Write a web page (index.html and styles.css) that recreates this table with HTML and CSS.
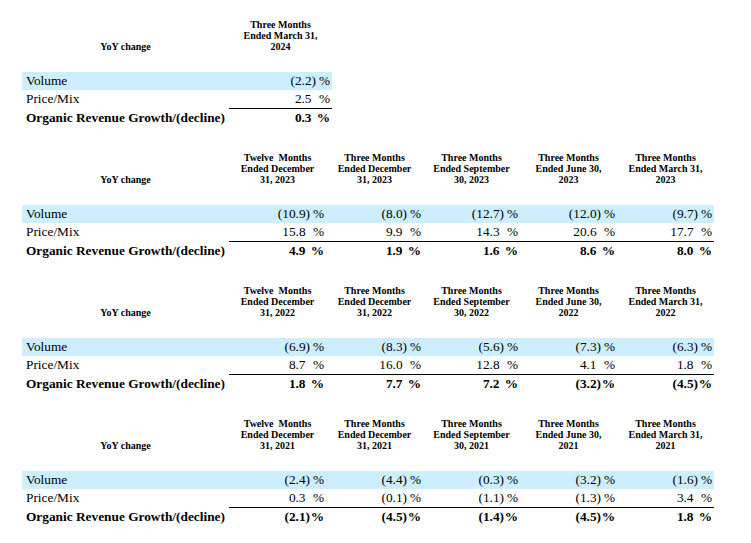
FILE: index.html
```html
<!DOCTYPE html>
<html>
<head>
<meta charset="utf-8">
<link rel="stylesheet" href="styles.css">
</head>
<body>
<div class="page">

<table class="fin t1">
  <colgroup><col class="c-label"><col class="c-wide"></colgroup>
  <thead>
    <tr>
      <th class="lbl">YoY change</th>
      <th>Three Months<br>Ended March 31,<br>2024</th>
    </tr>
  </thead>
  <tbody>
    <tr class="hl">
      <td class="lbl">Volume</td>
      <td class="num"><span class="v">(2.2)</span><span class="pct">%</span></td>
    </tr>
    <tr class="sub">
      <td class="lbl">Price/Mix</td>
      <td class="num"><span class="v">2.5<span class="ph">)</span></span><span class="pct">%</span></td>
    </tr>
    <tr class="tot">
      <td class="lbl">Organic Revenue Growth/(decline)</td>
      <td class="num"><span class="v">0.3<span class="ph">)</span></span><span class="pct">%</span></td>
    </tr>
  </tbody>
</table>

<table class="fin t5">
  <colgroup><col class="c-label"><col class="c-d"><col class="c-d"><col class="c-d"><col class="c-d"><col class="c-d"></colgroup>
  <thead>
    <tr>
      <th class="lbl">YoY change</th>
      <th>Twelve&nbsp; Months<br>Ended December<br>31, 2023</th>
      <th>Three Months<br>Ended December<br>31, 2023</th>
      <th>Three Months<br>Ended September<br>30, 2023</th>
      <th>Three Months<br>Ended June 30,<br>2023</th>
      <th>Three Months<br>Ended March 31,<br>2023</th>
    </tr>
  </thead>
  <tbody>
    <tr class="hl">
      <td class="lbl">Volume</td>
      <td class="num"><span class="v">(10.9)</span><span class="pct">%</span></td>
      <td class="num"><span class="v">(8.0)</span><span class="pct">%</span></td>
      <td class="num"><span class="v">(12.7)</span><span class="pct">%</span></td>
      <td class="num"><span class="v">(12.0)</span><span class="pct">%</span></td>
      <td class="num"><span class="v">(9.7)</span><span class="pct">%</span></td>
    </tr>
    <tr class="sub">
      <td class="lbl">Price/Mix</td>
      <td class="num"><span class="v">15.8<span class="ph">)</span></span><span class="pct">%</span></td>
      <td class="num"><span class="v">9.9<span class="ph">)</span></span><span class="pct">%</span></td>
      <td class="num"><span class="v">14.3<span class="ph">)</span></span><span class="pct">%</span></td>
      <td class="num"><span class="v">20.6<span class="ph">)</span></span><span class="pct">%</span></td>
      <td class="num"><span class="v">17.7<span class="ph">)</span></span><span class="pct">%</span></td>
    </tr>
    <tr class="tot">
      <td class="lbl">Organic Revenue Growth/(decline)</td>
      <td class="num"><span class="v">4.9<span class="ph">)</span></span><span class="pct">%</span></td>
      <td class="num"><span class="v">1.9<span class="ph">)</span></span><span class="pct">%</span></td>
      <td class="num"><span class="v">1.6<span class="ph">)</span></span><span class="pct">%</span></td>
      <td class="num"><span class="v">8.6<span class="ph">)</span></span><span class="pct">%</span></td>
      <td class="num"><span class="v">8.0<span class="ph">)</span></span><span class="pct">%</span></td>
    </tr>
  </tbody>
</table>

<table class="fin t5">
  <colgroup><col class="c-label"><col class="c-d"><col class="c-d"><col class="c-d"><col class="c-d"><col class="c-d"></colgroup>
  <thead>
    <tr>
      <th class="lbl">YoY change</th>
      <th>Twelve&nbsp; Months<br>Ended December<br>31, 2022</th>
      <th>Three Months<br>Ended December<br>31, 2022</th>
      <th>Three Months<br>Ended September<br>30, 2022</th>
      <th>Three Months<br>Ended June 30,<br>2022</th>
      <th>Three Months<br>Ended March 31,<br>2022</th>
    </tr>
  </thead>
  <tbody>
    <tr class="hl">
      <td class="lbl">Volume</td>
      <td class="num"><span class="v">(6.9)</span><span class="pct">%</span></td>
      <td class="num"><span class="v">(8.3)</span><span class="pct">%</span></td>
      <td class="num"><span class="v">(5.6)</span><span class="pct">%</span></td>
      <td class="num"><span class="v">(7.3)</span><span class="pct">%</span></td>
      <td class="num"><span class="v">(6.3)</span><span class="pct">%</span></td>
    </tr>
    <tr class="sub">
      <td class="lbl">Price/Mix</td>
      <td class="num"><span class="v">8.7<span class="ph">)</span></span><span class="pct">%</span></td>
      <td class="num"><span class="v">16.0<span class="ph">)</span></span><span class="pct">%</span></td>
      <td class="num"><span class="v">12.8<span class="ph">)</span></span><span class="pct">%</span></td>
      <td class="num"><span class="v">4.1<span class="ph">)</span></span><span class="pct">%</span></td>
      <td class="num"><span class="v">1.8<span class="ph">)</span></span><span class="pct">%</span></td>
    </tr>
    <tr class="tot">
      <td class="lbl">Organic Revenue Growth/(decline)</td>
      <td class="num"><span class="v">1.8<span class="ph">)</span></span><span class="pct">%</span></td>
      <td class="num"><span class="v">7.7<span class="ph">)</span></span><span class="pct">%</span></td>
      <td class="num"><span class="v">7.2<span class="ph">)</span></span><span class="pct">%</span></td>
      <td class="num"><span class="v">(3.2)</span><span class="pct">%</span></td>
      <td class="num"><span class="v">(4.5)</span><span class="pct">%</span></td>
    </tr>
  </tbody>
</table>

<table class="fin t5">
  <colgroup><col class="c-label"><col class="c-d"><col class="c-d"><col class="c-d"><col class="c-d"><col class="c-d"></colgroup>
  <thead>
    <tr>
      <th class="lbl">YoY change</th>
      <th>Twelve&nbsp; Months<br>Ended December<br>31, 2021</th>
      <th>Three Months<br>Ended December<br>31, 2021</th>
      <th>Three Months<br>Ended September<br>30, 2021</th>
      <th>Three Months<br>Ended June 30,<br>2021</th>
      <th>Three Months<br>Ended March 31,<br>2021</th>
    </tr>
  </thead>
  <tbody>
    <tr class="hl">
      <td class="lbl">Volume</td>
      <td class="num"><span class="v">(2.4)</span><span class="pct">%</span></td>
      <td class="num"><span class="v">(4.4)</span><span class="pct">%</span></td>
      <td class="num"><span class="v">(0.3)</span><span class="pct">%</span></td>
      <td class="num"><span class="v">(3.2)</span><span class="pct">%</span></td>
      <td class="num"><span class="v">(1.6)</span><span class="pct">%</span></td>
    </tr>
    <tr class="sub">
      <td class="lbl">Price/Mix</td>
      <td class="num"><span class="v">0.3<span class="ph">)</span></span><span class="pct">%</span></td>
      <td class="num"><span class="v">(0.1)</span><span class="pct">%</span></td>
      <td class="num"><span class="v">(1.1)</span><span class="pct">%</span></td>
      <td class="num"><span class="v">(1.3)</span><span class="pct">%</span></td>
      <td class="num"><span class="v">3.4<span class="ph">)</span></span><span class="pct">%</span></td>
    </tr>
    <tr class="tot">
      <td class="lbl">Organic Revenue Growth/(decline)</td>
      <td class="num"><span class="v">(2.1)</span><span class="pct">%</span></td>
      <td class="num"><span class="v">(4.5)</span><span class="pct">%</span></td>
      <td class="num"><span class="v">(1.4)</span><span class="pct">%</span></td>
      <td class="num"><span class="v">(4.5)</span><span class="pct">%</span></td>
      <td class="num"><span class="v">1.8<span class="ph">)</span></span><span class="pct">%</span></td>
    </tr>
  </tbody>
</table>

</div>
</body>
</html>
```

FILE: styles.css
```css
html, body {
  margin: 0;
  padding: 0;
  background: #ffffff;
}

body {
  font-family: "Liberation Serif", "Times New Roman", serif;
  color: #000000;
}

.page {
  padding: 19px 0 0 22px;
}

.fin {
  border-collapse: collapse;
  table-layout: fixed;
  margin-bottom: 25px;
}

.t1 { width: 310px; }
.t5 { width: 692px; }

.c-label { width: 207px; }
.c-wide { width: 103px; }
.c-d { width: 97px; }

.fin th {
  font-size: 10px;
  line-height: 11px;
  font-weight: bold;
  text-align: center;
  vertical-align: bottom;
  padding: 0 0 20px 0;
  white-space: nowrap;
}

.fin td {
  font-size: 13.33px;
  line-height: 18px;
  height: 18px;
  padding: 0;
  white-space: nowrap;
}

.fin td.lbl {
  padding-left: 4px;
}

.hl td {
  background: #cceeff;
}

.sub td.num {
  border-bottom: 1px solid #000000;
}

.tot td {
  font-weight: bold;
}

.num {
  text-align: right;
  padding-right: 2px !important;
}

.ph {
  visibility: hidden;
}

.pct {
  display: inline-block;
  width: 14px;
  text-align: right;
}
```
